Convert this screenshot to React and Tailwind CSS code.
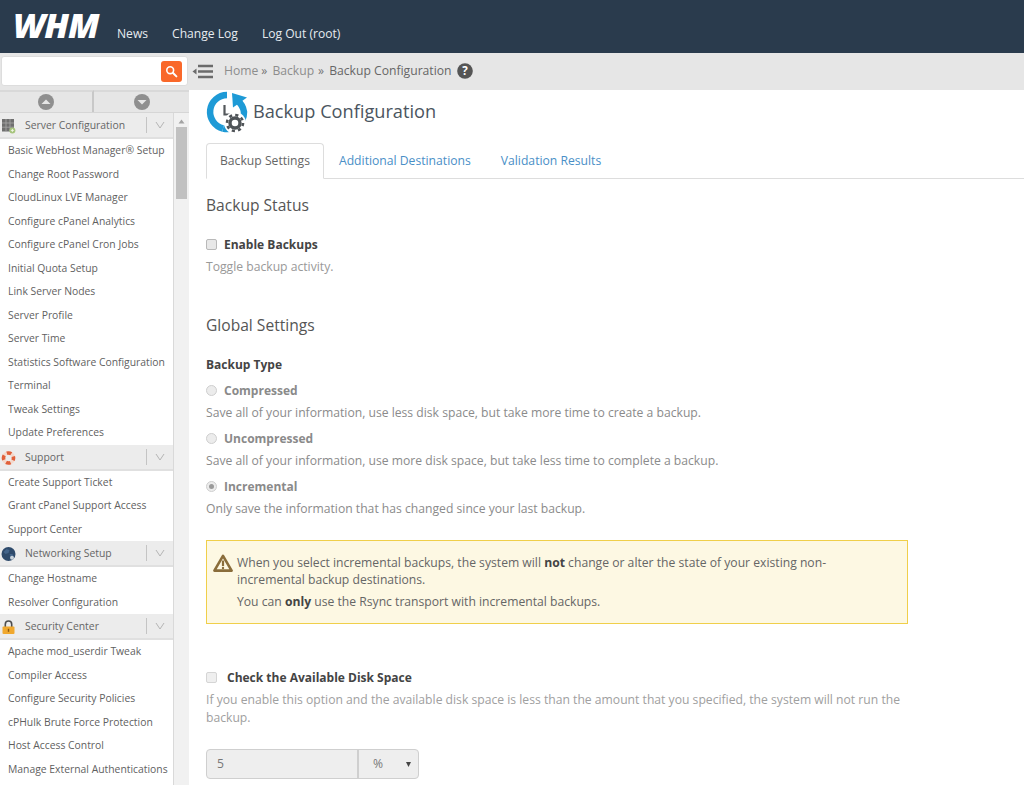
import React from "react";

const F = "[font-family:'Open_Sans',sans-serif]";

function Chevron() {
  return (
    <svg width="10" height="8" viewBox="0 0 10 8" className="shrink-0">
      <path d="M1 1l4 6 4-6" fill="none" stroke="#b5b5b5" strokeWidth="1" />
    </svg>
  );
}

function ServerIcon() {
  return (
    <svg width="16" height="16" viewBox="0 0 16 16">
      <rect x="2" y="1" width="12" height="12.5" fill="#6f6f6f" />
      <path d="M2 5h12M2 9.2h12M6 1v12.5M10 1v12.5" stroke="#a8a8a8" strokeWidth=".8" />
      <circle cx="12.4" cy="12.4" r="3" fill="#a6c47c" />
      <path d="M10.9 12.4h3M12.4 10.9v3" stroke="#f2f6ea" strokeWidth=".9" />
    </svg>
  );
}
function SupportIcon() {
  return (
    <svg width="16" height="16" viewBox="0 0 16 16">
      <circle cx="8.5" cy="8" r="5" fill="none" stroke="#f4d8cb" strokeWidth="3.6" />
      <circle cx="8.5" cy="8" r="5" fill="none" stroke="#e0603a" strokeWidth="3.6" strokeDasharray="4.6 3.25" strokeDashoffset="2.3" />
    </svg>
  );
}
function GlobeIcon() {
  return (
    <svg width="16" height="16" viewBox="0 0 16 16">
      <circle cx="8.5" cy="8" r="7" fill="#2e4a6b" />
      <path d="M3.5 6l3-3 3 1-1 3-3 1zM9.5 8l3 0 1 2-2 2z" fill="#43648a" />
      <circle cx="12" cy="11.8" r="2" fill="#c9d3dc" />
    </svg>
  );
}
function LockIcon() {
  return (
    <svg width="16" height="16" viewBox="0 0 16 16">
      <path d="M5.3 8V5.2a3.2 3.2 0 0 1 6.4 0V8" fill="none" stroke="#4d4d4d" strokeWidth="1.6" />
      <rect x="2.5" y="7.5" width="12" height="7.5" rx="1" fill="#f0a82e" />
      <rect x="7.8" y="9.8" width="1.4" height="3" fill="#8a5a10" />
    </svg>
  );
}

function SectionHead({ icon, title }) {
  return (
    <div className="h-[26px] flex items-center bg-[#ececec] border-b-2 border-[#e0e0e0] shrink-0">
      <div className="w-[25px] pt-[2px] flex justify-start">{icon}</div>
      <div className="flex-1 pt-[2px] text-[10.4px] text-[#666666]">{title}</div>
      <div className="h-[16px] w-[26px] border-l border-[#c4c4c4] flex items-center justify-center mr-[1px]">
        <Chevron />
      </div>
    </div>
  );
}

function Item({ children }) {
  return <div className="h-[23.5px] leading-[23.5px] pl-[8px] text-[10.37px] text-[#5f5f5f] bg-white whitespace-nowrap shrink-0">{children}</div>;
}

const server = [
  "Basic WebHost Manager® Setup", "Change Root Password", "CloudLinux LVE Manager", "Configure cPanel Analytics",
  "Configure cPanel Cron Jobs", "Initial Quota Setup", "Link Server Nodes", "Server Profile", "Server Time",
  "Statistics Software Configuration", "Terminal", "Tweak Settings", "Update Preferences",
];
const support = ["Create Support Ticket", "Grant cPanel Support Access", "Support Center"];
const net = ["Change Hostname", "Resolver Configuration"];
const sec = ["Apache mod_userdir Tweak", "Compiler Access", "Configure Security Policies", "cPHulk Brute Force Protection", "Host Access Control", "Manage External Authentications"];

function Round({ up }) {
  return (
    <svg width="16" height="16" viewBox="0 0 16 16">
      <circle cx="8" cy="8" r="8" fill="#8f8f8f" />
      <path d={up ? "M3.5 10L8 5.5 12.5 10z" : "M3.5 6L8 10.5 12.5 6z"} fill="#e6e6e6" />
    </svg>
  );
}

function Sidebar() {
  return (
    <aside className="w-[189px] shrink-0 flex flex-col h-full">
      <div className="h-[37px] bg-[#e6e6e6] pt-[3px] pl-[1px] shrink-0">
        <div className="w-[187px] h-[30px] bg-white rounded-[3px] border border-[#ddd] flex items-center justify-end pr-[5px]">
          <div className="w-[21px] h-[21px] rounded-[3px] bg-[#f9682a] flex items-center justify-center">
            <svg width="13" height="13" viewBox="0 0 13 13">
              <circle cx="5.2" cy="5.2" r="3.4" fill="none" stroke="#fff" strokeWidth="1.6" />
              <path d="M7.8 7.8l3.6 3.6" stroke="#fff" strokeWidth="2" strokeLinecap="round" />
            </svg>
          </div>
        </div>
      </div>
      <div className="h-[23px] flex bg-[#e6e6e6] border-b border-[#d6d6d6] shrink-0">
        <div className="w-[94px] flex items-center justify-center border-r-2 border-t-2 border-[#c8c8c8] border-t-[#d9d9d9]"><Round up /></div>
        <div className="flex-1 flex items-center justify-center border-t-2 border-[#d9d9d9]"><Round /></div>
      </div>
      <div className="flex flex-1 min-h-0 overflow-hidden">
        <div className="w-[174px] shrink-0 flex flex-col border-r border-[#d9d9d9] overflow-hidden">
          <SectionHead icon={<ServerIcon />} title="Server Configuration" />
          {server.map((s) => <Item key={s}>{s}</Item>)}
          <SectionHead icon={<SupportIcon />} title="Support" />
          {support.map((s) => <Item key={s}>{s}</Item>)}
          <SectionHead icon={<GlobeIcon />} title="Networking Setup" />
          {net.map((s) => <Item key={s}>{s}</Item>)}
          <SectionHead icon={<LockIcon />} title="Security Center" />
          {sec.map((s) => <Item key={s}>{s}</Item>)}
        </div>
        <div className="flex-1 bg-[#f1f1f1] flex flex-col items-center pt-[6px]">
          <svg width="7" height="5" viewBox="0 0 7 5"><path d="M0.5 4.5L3.5 .5l3 4z" fill="#a3a3a3" /></svg>
          <div className="w-[11px] h-[72px] bg-[#c1c1c1] mt-[3px]" />
        </div>
      </div>
    </aside>
  );
}

function TitleIcon() {
  return (
    <svg width="42" height="42" viewBox="0 0 42 42" className="shrink-0">
      <path d="M21 4A17 17 0 0 0 17 37.5" fill="none" stroke="#1e9ad6" strokeWidth="6.5" />
      <path d="M17 37.5A17 17 0 0 0 38 21 17 17 0 0 0 31 9.5" fill="none" stroke="#1e9ad6" strokeWidth="6.5" />
      <path d="M26 2L41 6.5 27 16.5z" fill="#1e9ad6" />
      <path d="M18.5 14v9.5h7" fill="none" stroke="#54585c" strokeWidth="2.2" />
      <circle cx="29" cy="32" r="11" fill="#fff" />
      <circle cx="29" cy="32" r="5" fill="none" stroke="#4f5458" strokeWidth="3.4" />
      <circle cx="29" cy="32" r="8" fill="none" stroke="#4f5458" strokeWidth="2.6" strokeDasharray="3.14 3.14" />
    </svg>
  );
}

function Check({ className = "" }) {
  return <span className={"block w-[11px] h-[11px] rounded-[2px] border border-[#b9b9b9] bg-[#e8e8e8] shrink-0 " + className} />;
}

function Radio({ checked }) {
  return (
    <span className="w-[11px] h-[11px] rounded-full border border-[#cfcfcf] bg-[#ececec] flex items-center justify-center shrink-0">
      {checked && <span className="w-[5px] h-[5px] rounded-full bg-[#9a9a9a]" />}
    </span>
  );
}

function RadioOption({ label, help, checked, mt }) {
  return (
    <div className={mt}>
      <div className="flex items-center gap-[7px] h-[17px]">
        <Radio checked={checked} />
        <span className="font-bold text-[12px] text-[#8a8a8a]">{label}</span>
      </div>
      <p className="mt-[5px] leading-[17px] text-[#8b8b8b]">{help}</p>
    </div>
  );
}

function Main() {
  return (
    <main className="flex-1 min-w-0 flex flex-col h-full">
      <div className="h-[37px] bg-[#e6e6e6] flex items-center shrink-0 pl-[3px] pb-[1px]">
        <svg width="22" height="17" viewBox="0 0 22 17" className="shrink-0">
          <path d="M6 3h15M6 8.5h15M6 14h15" stroke="#6b6b6b" strokeWidth="2.4" />
          <path d="M4.5 5.5v6L.5 8.5z" fill="#6b6b6b" />
        </svg>
        <div className="ml-[10px] text-[12.17px] text-[#8d8d8d] flex items-center whitespace-nowrap">
          <span>Home</span><span className="ml-[3px] text-[#777]">»</span>
          <span className="ml-[5px]">Backup</span><span className="ml-[4px] text-[#777]">»</span>
          <span className="ml-[5px] text-[#666666]">Backup Configuration</span>
          <svg width="16" height="16" viewBox="0 0 16 16" className="ml-[5px]">
            <circle cx="8" cy="8" r="7.8" fill="#555" />
            <text x="8" y="12" textAnchor="middle" fontSize="11.5" fontWeight="700" fill="#fff" fontFamily="Open Sans">?</text>
          </svg>
        </div>
      </div>

      <div className="flex-1 min-h-0 overflow-hidden bg-white text-[12.17px]">
        <div className="pl-[17px] pt-[1px] flex items-center h-[43px] ml-0">
          <TitleIcon />
          <h1 className="ml-[5px] text-[18.2px] leading-[41px] pb-[2px] text-[#4b5560] font-normal">Backup Configuration</h1>
        </div>

        <div className="mt-[10px] h-[36px] ml-[17px] flex items-stretch border-b border-[#dddddd]">
          <div className="w-[118px] h-[36px] border border-[#dddddd] border-b-white rounded-t-[4px] bg-white flex items-center justify-center text-[#666666] -mb-px">Backup Settings</div>
          <div className="ml-[15px] pt-[1px] flex items-center text-[#4a8fc7]">Additional Destinations</div>
          <div className="ml-[30px] pt-[1px] flex items-center text-[#4a8fc7]">Validation Results</div>
        </div>

        <div className="pl-[17px] w-[720px]">
          <h2 className="mt-[15px] text-[15.6px] leading-[22px] text-[#555] font-normal">Backup Status</h2>
          <div className="mt-[20px] flex items-center gap-[7px] h-[17px]">
            <Check />
            <span className="font-bold text-[12px] text-[#444]">Enable Backups</span>
          </div>
          <p className="mt-[5px] leading-[17px] text-[#999]">Toggle backup activity.</p>

          <h2 className="mt-[39px] text-[15.6px] leading-[22px] text-[#555] font-normal">Global Settings</h2>
          <div className="mt-[20px] h-[17px] font-bold text-[12px] text-[#444]">Backup Type</div>

          <RadioOption mt="mt-[9px]" label="Compressed" help="Save all of your information, use less disk space, but take more time to create a backup." />
          <RadioOption mt="mt-[9px]" label="Uncompressed" help="Save all of your information, use more disk space, but take less time to complete a backup." />
          <RadioOption mt="mt-[9px]" checked label="Incremental" help="Only save the information that has changed since your last backup." />

          <div className="mt-[23px] w-[702px] h-[84px] border border-[#f0cf4a] bg-[#fdf8e3] flex pl-[6px] pt-[13px] text-[#666]">
            <svg width="20" height="18" viewBox="0 0 20 18" className="shrink-0">
              <path d="M10 1.8L18.6 16.6H1.4z" fill="none" stroke="#8a6d3b" strokeWidth="2.6" strokeLinejoin="round" />
              <path d="M10 6.5v5.5" stroke="#8a6d3b" strokeWidth="2.2" />
              <circle cx="10" cy="14" r="1.2" fill="#8a6d3b" />
            </svg>
            <div className="ml-[4px] w-[640px] leading-[17px]">
              <p>When you select incremental backups, the system will <b className="text-[#444]">not</b> change or alter the state of your existing non-incremental backup destinations.</p>
              <p className="mt-[5px]">You can <b className="text-[#444]">only</b> use the Rsync transport with incremental backups.</p>
            </div>
          </div>

          <div className="mt-[45px] flex items-center gap-[10px] h-[17px]">
            <Check className="border-[#d5d5d5] bg-[#efefef]" />
            <span className="font-bold text-[12px] text-[#444]">Check the Available Disk Space</span>
          </div>
          <p className="mt-[5px] leading-[18px] text-[#a0a0a0] w-[703px]">If you enable this option and the available disk space is less than the amount that you specified, the system will not run the backup.</p>

          <div className="mt-[22px] w-[213px] h-[30px] flex border border-[#cfcfcf] rounded-[4px] bg-[#eeeeee] text-[#777]">
            <div className="w-[152px] border-r-2 border-[#cfcfcf] pl-[10px] flex items-center">5</div>
            <div className="flex-1 flex items-center justify-between pl-[14px] pr-[7px]">
              <span>%</span>
              <svg width="5" height="5" viewBox="0 0 5 5"><path d="M0 0h5L2.5 5z" fill="#444" /></svg>
            </div>
          </div>
        </div>
      </div>
    </main>
  );
}

export default function App() {
  return (
    <div className={"w-[1024px] h-[785px] overflow-hidden flex flex-col bg-white " + F}>
      <header className="h-[53px] bg-[#2a3b4d] flex items-start shrink-0">
        <div className="ml-[13px] mt-[8px] w-[87px] origin-left scale-x-[1.05] text-white italic font-extrabold text-[33px] leading-[36px] tracking-[-1px]">WHM</div>
        <nav className="ml-[17px] mt-[25px] flex gap-[24px] text-[12.1px] leading-[18px] text-[#e6ebf0]">
          <span>News</span><span>Change Log</span><span>Log Out (root)</span>
        </nav>
      </header>
      <div className="flex-1 min-h-0 flex">
        <Sidebar />
        <Main />
      </div>
    </div>
  );
}
